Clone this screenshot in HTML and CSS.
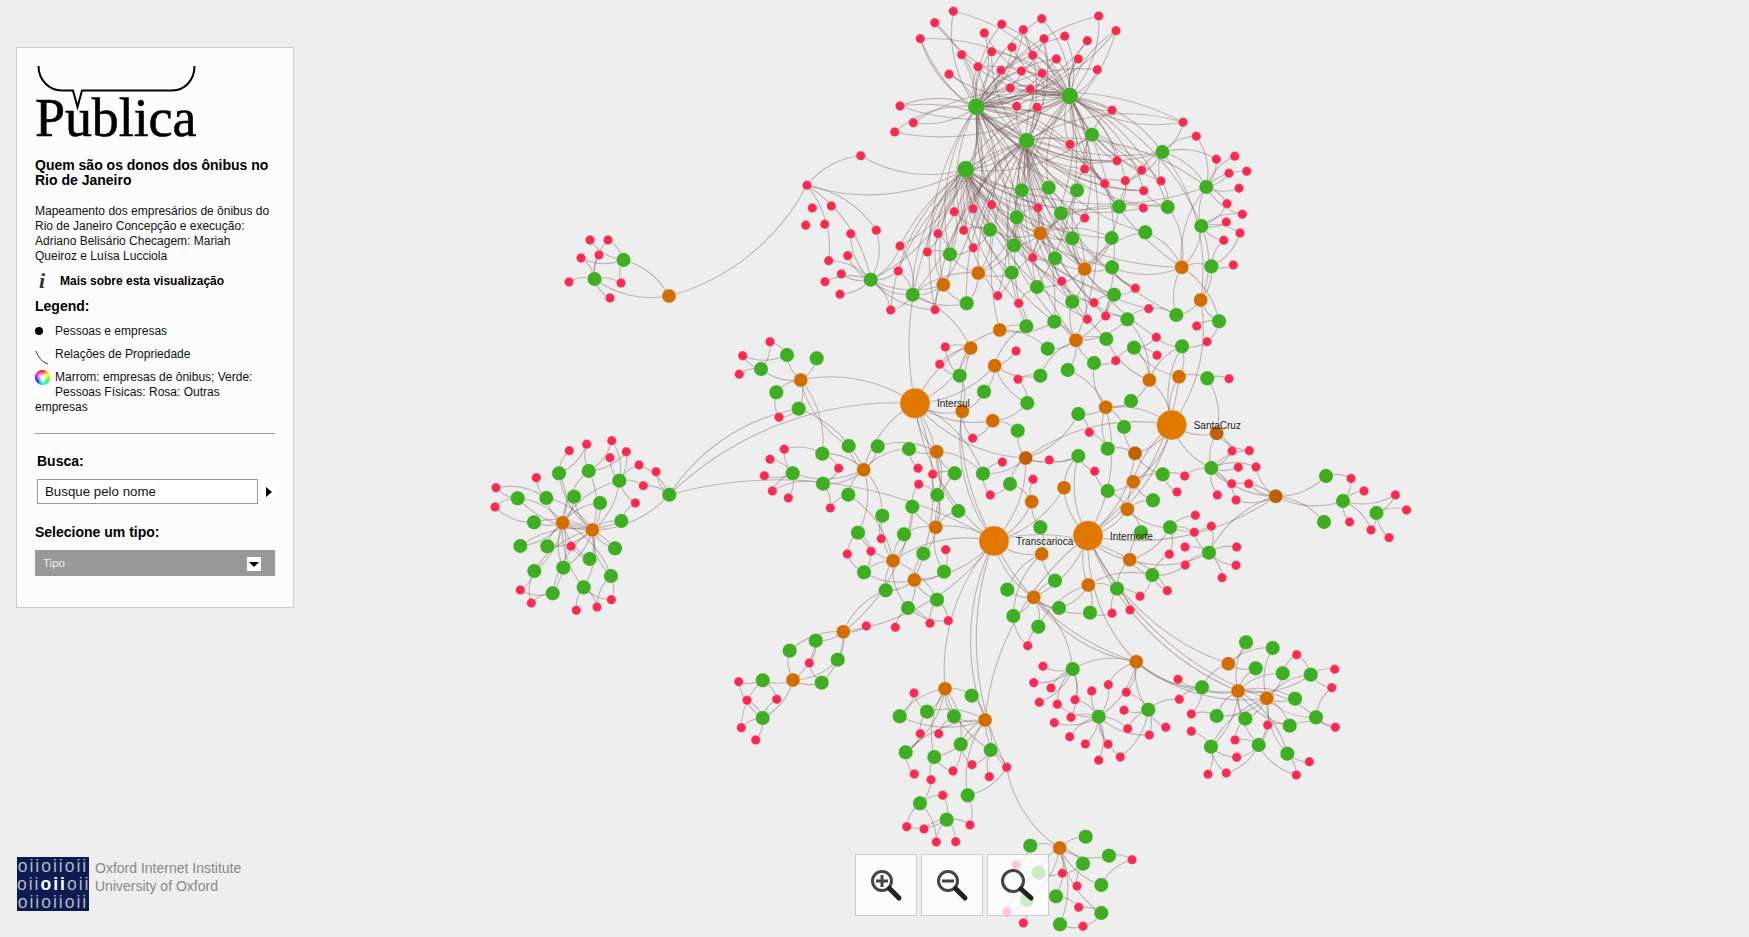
FILE: index.html
```html
<!DOCTYPE html>
<html lang="pt-BR">
<head>
    <meta charset="UTF-8">
    <meta name="viewport" content="width=device-width, initial-scale=1.0">
    <title>Quem são os donos dos ônibus no Rio de Janeiro</title>
    <link rel="stylesheet" href="styles.css">
</head>
<body>
    <svg id="graph" class="graph" width="1749" height="937"></svg>

    <aside class="panel">
        <div class="logo">
            <svg class="logo-bracket" width="170" height="46">
                <path d="M3.5 0 C3.5 14 14 24.5 27 24.5 L38 24.5 L42.5 41 L47 24.5 L137 24.5 C150 24.5 159.5 14 159.5 0" fill="none" stroke="#000" stroke-width="2"/>
            </svg>
            Publica
        </div>
        <h1>Quem são os donos dos ônibus no Rio de Janeiro</h1>
        <p class="intro">Mapeamento dos empresários de ônibus do Rio de Janeiro Concepção e execução: Adriano Belisário Checagem: Mariah Queiroz e Luísa Lucciola</p>
        <div class="more"><span class="more-icon">i</span>Mais sobre esta visualização</div>
        <h2 class="legend-title">Legend:</h2>
        <div class="legend-item"><span class="legend-dot"></span>Pessoas e empresas</div>
        <div class="legend-item">
            <svg class="legend-curve" width="15" height="15"><path d="M1 1 C3 7 7 12 13 14" fill="none" stroke="#333" stroke-width="1"/></svg>Relações de Propriedade
        </div>
        <div class="legend-item"><span class="legend-wheel"></span>Marrom: empresas de ônibus; Verde: Pessoas Físicas: Rosa: Outras empresas</div>
        <hr class="divider">
        <h2 class="search-title">Busca:</h2>
        <div class="search-row">
            <input class="search-input" type="text" value="Busque pelo nome">
            <span class="search-go"></span>
        </div>
        <h2 class="type-title">Selecione um tipo:</h2>
        <div class="type-select">Tipo<span class="type-arrow"></span></div>
    </aside>

    <div class="oxford">
        <div class="oxford-mark">
            <div>oiioiioii</div>
            <div>oii<b>oii</b>oii</div>
            <div>oiioiioii</div>
        </div>
        <div class="oxford-text">Oxford Internet Institute<br>University of Oxford</div>
    </div>

    <div class="zoom-controls">
        <button class="zoom-btn">
            <svg width="60" height="60"><circle cx="26" cy="26" r="9.5" fill="none" stroke="#444" stroke-width="3"/><path d="M20 26H32M26 20V32" stroke="#444" stroke-width="3"/><path d="M33.5 33.5L43 43" stroke="#222" stroke-width="5" stroke-linecap="round"/></svg>
        </button>
        <button class="zoom-btn">
            <svg width="60" height="60"><circle cx="26" cy="26" r="9.5" fill="none" stroke="#444" stroke-width="3"/><path d="M20 26H32" stroke="#444" stroke-width="3"/><path d="M33.5 33.5L43 43" stroke="#222" stroke-width="5" stroke-linecap="round"/></svg>
        </button>
        <button class="zoom-btn">
            <svg width="60" height="60"><circle cx="25" cy="26" r="10.5" fill="none" stroke="#444" stroke-width="3"/><path d="M33 34L43 43" stroke="#222" stroke-width="5" stroke-linecap="round"/></svg>
        </button>
    </div>

    <script src="graph.js"></script>
</body>
</html>
```
FILE: styles.css
```css
body {
    margin: 0;
    width: 1749px;
    height: 937px;
    overflow: hidden;
    background-color: #eeeeee;
    font-family: "Liberation Sans", Arial, sans-serif;
    color: #000;
}
.graph { position: absolute; left: 0; top: 0; }
.graph .edge { fill: none; stroke: #6b4a4a; stroke-opacity: 0.36; stroke-width: 1.1; }
.graph .node { stroke: #fff; stroke-opacity: 0.25; stroke-width: 1; }
.graph .red { fill: #fb2a50; }
.graph .green { fill: #3fae22; }
.graph .orange { fill: #d26d00; }
.graph .dark { fill: #bf6102; }
.graph .big { fill: #e07800; }
.graph text { font-size: 10px; fill: #222; }

.panel {
    position: absolute;
    left: 16px;
    top: 47px;
    width: 240px;
    padding: 18px 18px 31px;
    background-color: #fcfcfc;
    border: 1px solid #cccccc;
}
.logo {
    position: relative;
    height: 53px;
    padding-top: 26px;
    font-family: "Liberation Serif", "Times New Roman", serif;
    font-size: 54px;
    line-height: 52px;
    letter-spacing: -0.1px;
    -webkit-text-stroke: 0.6px #000;
}
.logo-bracket { position: absolute; left: 0; top: 0; }
h1 { margin: 13px 0 0; font-size: 14px; line-height: 15px; font-weight: bold; }
h2 { margin: 0; font-size: 14px; line-height: 16px; font-weight: bold; }
.intro { margin: 16px 0 0; font-size: 12px; line-height: 15px; color: #111; }
.more { display: flex; align-items: center; margin-top: 9px; height: 15px; font-size: 12px; font-weight: bold; }
.more-icon {
    width: 25px;
    padding-left: 4px;
    box-sizing: border-box;
    font-family: "Liberation Serif", serif;
    font-style: italic;
    font-size: 22px;
    color: #333;
}
.legend-title { margin-top: 10px; margin-bottom: 10px; }
.legend-item { font-size: 12px; line-height: 15px; margin-bottom: 8px; color: #111; }
.legend-dot {
    float: left;
    width: 8px;
    height: 8px;
    margin: 3px 12px 0 0;
    border-radius: 50%;
    background-color: #000;
}
.legend-curve { float: left; margin-right: 5px; margin-top: 3px; }
.legend-wheel {
    float: left;
    width: 15px;
    height: 15px;
    margin-right: 5px;
    margin-bottom: 15px;
    border-radius: 50%;
    background: radial-gradient(circle, #fff 15%, rgba(255,255,255,0) 65%),
        conic-gradient(#ff0000, #ffff00, #00ff00, #00ffff, #0000ff, #ff00ff, #ff0000);
}
.divider { margin: 18px 0 0; height: 1px; border: none; background-color: #999999; }
.search-title { margin-top: 19px; padding-left: 2px; }
.search-row { display: flex; align-items: center; margin-top: 10px; padding-left: 2px; }
.search-input {
    box-sizing: border-box;
    width: 221px;
    height: 25px;
    padding: 0 7px;
    border: 1px solid #999999;
    background-color: #fff;
    font-family: "Liberation Sans", Arial, sans-serif;
    font-size: 13.3px;
    color: #111;
}
.search-go {
    width: 13px;
    height: 13px;
    margin-left: 4px;
    background-color: #fff;
    position: relative;
}
.search-go::after {
    content: "";
    position: absolute;
    left: 4px;
    top: 1.5px;
    border-left: 6px solid #000;
    border-top: 5px solid transparent;
    border-bottom: 5px solid transparent;
}
.type-title { margin-top: 20px; }
.type-select {
    position: relative;
    margin-top: 10px;
    height: 26px;
    padding-left: 8px;
    background-color: #999999;
    color: #eee;
    font-size: 11.5px;
    line-height: 26px;
}
.type-arrow {
    position: absolute;
    right: 14px;
    top: 7px;
    width: 14px;
    height: 14px;
    background-color: #fff;
}
.type-arrow::after {
    content: "";
    position: absolute;
    left: 2px;
    top: 5px;
    border-top: 5px solid #000;
    border-left: 5px solid transparent;
    border-right: 5px solid transparent;
}

.oxford { position: absolute; left: 17px; top: 857px; display: flex; }
.oxford-mark {
    width: 72px;
    height: 54px;
    background-color: #0c1c52;
    color: #b4b8c4;
    font-size: 17.5px;
    line-height: 18px;
    letter-spacing: 2px;
    text-align: center;
}
.oxford-mark div { height: 18px; }
.oxford-mark b { color: #fff; }
.oxford-text { margin-left: 6px; padding-top: 2px; font-size: 14px; line-height: 18px; color: #888888; }

.zoom-controls { position: absolute; left: 855px; top: 854px; display: flex; gap: 4px; }
.zoom-btn {
    width: 62px;
    height: 62px;
    padding: 0;
    background-color: rgba(255, 255, 255, 0.75);
    border: 1px solid #cccccc;
}
.zoom-btn svg { display: block; }
```
FILE: graph.js
```js
// node positions, grouped by area of the map. coordinates are at 3x, relative to ox/oy
const areas = [
    { ox: 880, oy: 0,
      red: [[220,34],[164,68],[121,116],[313,99],[365,73],[430,89],[485,56],[245,164],[335,155],[396,142],[458,166],[492,116],[554,109],[622,122],[529,177],[595,177],[656,48],[708,92],[652,209],[207,223],[294,200],[363,211],[424,213],[486,220],[391,264],[451,268],[410,319],[471,322],[696,331],[60,318],[100,368],[44,396],[909,367],[949,409],[570,433],[711,482],[785,511],[614,507],[674,551],[736,542],[843,543],[791,572],[790,624],[1009,478],[1064,469],[1047,520],[1100,514],[1077,565],[1041,611],[1087,643],[1039,666],[1080,699],[1031,721],[1060,795],[474,623],[614,654],[335,614],[279,626],[223,635],[251,691],[174,701],[60,738],[142,756],[55,813],[280,743],[458,773],[545,844],[766,865],[353,887]],
      green: [[636,404],[847,456],[979,561],[964,678],[994,799],[425,571],[506,563],[591,571],[410,652],[543,640],[717,620],[863,621],[330,689],[577,715],[695,714],[796,697],[402,736],[525,775],[696,802],[210,763],[395,818],[471,861],[98,884],[260,910],[702,884],[577,905]],
      orange: [[481,700],[614,807],[905,802],[295,819],[190,854],[962,900]] },
    { ox: 780, oy: 150,
      red: [[242,17],[81,106],[97,174],[154,168],[77,226],[134,223],[212,251],[289,241],[203,317],[146,332],[184,372],[135,395],[180,433],[465,479],[653,437],[716,460],[496,591],[708,603],[479,643],[332,480]],
      green: [[272,389],[739,529],[823,515],[803,596]],
      orange: [[659,540],[572,594],[644,647]] },
    { ox: 1050, oy: 270,
      red: [[132,98],[112,148],[167,138],[296,116],[440,168],[471,215],[319,202],[321,256],[197,272]],
      green: [[232,148],[379,135],[507,154],[169,207],[252,233],[396,229],[132,279]],
      orange: [[78,211]] },
    { ox: 880, oy: 370,
      red: [[414,28],[1047,26],[278,205],[628,187],[367,276],[508,270],[644,304],[114,295],[158,313],[116,343],[459,328],[331,375],[914,318],[891,366],[1056,243],[1108,242],[1075,292],[1128,291],[1055,341],[1106,341],[1012,375],[1068,390],[946,436],[994,469],[943,487],[915,531],[868,553],[916,585],[1070,531],[1068,586],[1026,623],[197,539],[780,679],[862,662],[750,720],[696,730],[443,827],[489,889],[205,752],[150,760],[46,772]],
      green: [[239,17],[481,17],[563,0],[982,25],[312,65],[442,99],[413,182],[595,132],[753,93],[732,171],[87,237],[595,258],[683,236],[994,294],[848,313],[224,310],[309,311],[390,342],[683,363],[819,391],[172,375],[97,410],[7,437],[235,423],[72,493],[481,472],[870,472],[783,487],[987,548],[130,551],[192,605],[17,661],[171,689],[84,714],[817,615],[382,659],[711,656],[525,632],[537,714],[400,738],[630,728],[475,770],[1098,817],[1178,834],[1127,895],[578,897]],
      orange: [[677,112],[338,152],[247,124],[170,245],[552,353],[760,335],[742,418],[455,395],[167,472],[39,572],[103,630],[485,552],[749,569],[625,645],[461,682],[769,875],[1045,881],[808,30],[897,20]],
      dark: [[437,264],[765,250],[1010,190],[1187,379]] },
    { ox: 720, oy: 330,
      red: [[150,35],[68,77],[58,133],[177,262],[193,358],[150,388],[133,437],[157,483],[205,504],[356,415],[331,534],[484,626],[453,664],[382,672]],
      green: [[201,75],[290,85],[123,117],[169,187],[236,236],[218,430],[307,371],[386,348],[473,349],[309,461],[385,494],[414,608],[432,727]],
      orange: [[242,150],[431,419]] },
    { ox: 480, oy: 420,
      red: [[268,92],[320,73],[395,62],[390,113],[439,95],[477,135],[528,155],[490,197],[466,249],[169,173],[48,203],[45,261],[273,379],[121,510],[154,549],[289,571],[351,561],[394,539]],
      green: [[326,153],[237,160],[418,182],[113,235],[199,234],[282,230],[360,249],[568,224],[162,307],[424,303],[121,378],[202,379],[405,385],[329,417],[163,453],[250,443],[393,468],[311,502],[218,520]],
      orange: [[248,308],[337,330]] },
    { ox: 720, oy: 600,
      red: [[439,78],[268,189],[56,245],[81,301],[170,298],[64,383],[107,420],[582,279],[601,401],[656,401],[756,494],[699,513],[583,522],[633,539],[860,502],[808,530],[668,586],[560,680],[612,687],[750,675],[649,726],[707,725]],
      green: [[287,122],[209,152],[353,179],[128,241],[305,248],[128,354],[755,287],[539,349],[621,335],[702,349],[722,433],[812,450],[557,457],[643,471],[743,586],[600,610],[680,659]],
      orange: [[370,95],[219,240],[675,266],[795,360]] },
    { ox: 1020, oy: 620,
      red: [[41,188],[93,204],[58,247],[112,253],[165,239],[215,213],[265,194],[319,217],[312,271],[323,326],[153,292],[103,308],[149,350],[196,372],[264,373],[236,421],[301,411],[437,322],[388,345],[830,104],[944,148],[935,203],[946,322],[474,178],[478,238],[514,282],[514,334],[645,360],[650,412],[564,463],[619,459],[743,315],[868,425],[829,465]],
      green: [[236,290],[385,269],[546,202],[590,288],[573,380],[676,296],[788,160],[872,164],[825,236],[809,317],[888,292],[716,375],[802,401]],
      orange: [[654,213],[740,235]] },
    { ox: 840, oy: 830,
      red: [[876,89],[667,130],[711,168],[716,232],[729,289],[550,279],[529,105],[500,245]],
      green: [[571,47],[737,20],[807,77],[729,101],[784,165],[648,199],[784,249],[660,283],[596,128],[561,210]],
      orange: [[659,54]] }
];

// small clusters far from the rest, plain page coordinates
const outer = [
    [669,296,"orange"],[623.5,260,"green"],[594.5,279,"green"],[590,240,"red"],[608,240,"red"],[581,258,"red"],[599,255,"red"],[569,282,"red"],[621,283,"red"],[610,298,"red"],
    [1326,476,"green"],[1343,501,"green"],[1324,522,"green"],[1376.5,513,"green"],[1351,478.5,"red"],[1364,491,"red"],[1395.4,495,"red"],[1406.5,510,"red"],[1349.6,522,"red"],[1371,530,"red"],[1389,537.6,"red"]
];

const nodes = [];

function addNode(x, y, type, r, label) {
    // areas overlap a little, skip what is already there
    if (nodes.some(n => Math.hypot(n.x - x, n.y - y) < 5)) return;
    nodes.push({ x, y, type, r, label, i: nodes.length });
}

// the four big companies and the four big owners go first
addNode(915, 403.3, "big", 15, "Intersul");
addNode(1171.7, 425, "big", 15, "SantaCruz");
addNode(994, 541, "big", 15, "Transcarioca");
addNode(1088, 535.7, "big", 15, "Internorte");
addNode(976.3, 106.7, "green", 8.5);
addNode(1069.7, 96, "green", 8.5);
addNode(1026.7, 140.7, "green", 8);
addNode(965.7, 169.3, "green", 8.5);

const sizes = { red: 4.7, green: 7.2, orange: 7, dark: 7 };
areas.forEach(a => {
    ["orange", "dark", "green", "red"].forEach(type => {
        (a[type] || []).forEach(p => addNode(a.ox + p[0] / 3, a.oy + p[1] / 3, type, sizes[type]));
    });
});
outer.forEach(p => addNode(p[0], p[1], p[2], sizes[p[2]]));

const bigs = nodes.slice(0, 4);
const owners = nodes.slice(4, 8);
const firms = nodes.filter(n => n.type == "orange" || n.type == "dark");
const holders = nodes.filter(n => n.type != "red");
const seen = {};
const edges = [];

function link(a, b, sweep) {
    const key = Math.min(a.i, b.i) + "-" + Math.max(a.i, b.i);
    if (a == b || seen[key]) return;
    seen[key] = true;
    edges.push([a, b, sweep === undefined ? (a.i + b.i) % 2 : sweep]);
}

function nearest(n, pool, count, max) {
    return pool
        .filter(p => p != n && Math.hypot(p.x - n.x, p.y - n.y) < max)
        .sort((p, q) => Math.hypot(p.x - n.x, p.y - n.y) - Math.hypot(q.x - n.x, q.y - n.y))
        .slice(0, count);
}

function at(x, y) {
    return nearest({ x, y }, nodes, 1, 40)[0];
}

// long ties between clusters, [from x, from y, to x, to y, sweep]. these go first so they keep their bend
const ties = [
    [807,185,860,156,1],[807,185,966,169,0],[669,296,807,185,0],[860,156,966,169,0],[807,185,871,280,1],
    [807,185,815,245,1],[807,185,866,210,1],[807,185,831,250,1],[807,185,866,247,1],
    [669,495,915,403,1],[669,495,799,408,1],[669,495,994,541,1],[799,380,915,403,1],[586,530,669,495,0],
    [871,280,966,169,0],[900,246,966,169,0],[871,280,913,315,0],[871,280,947,309,0],[913,315,967,319,0],[913,315,975,349,1],
    [915,403,966,169,1],[915,403,1003,320,1],[915,403,994,471,1],[915,403,962,411,0],[915,403,1026,458,0],[915,403,963,358,0],[915,403,994,541,0],
    [994,541,1026,458,0],[994,541,962,411,1],[994,541,935,527,0],[994,541,893,561,0],[994,541,1064,488,0],[994,541,945,689,0],[994,541,985,720,0],[994,541,843,632,1],[994,541,1034,597,0],[994,541,1136,662,0],[994,541,1042,554,0],[994,541,1007,767,0],
    [1088,536,1064,488,1],[1088,536,1127,509,0],[1088,536,1130,559,0],[1088,536,1088,585,0],[1088,536,1034,597,1],[1088,536,1136,662,0],[1088,536,1228,664,0],[1088,536,1267,698,0],[1088,536,1238,691,0],[1088,536,1276,496,0],[1088,536,1171,425,0],[1088,536,1072,450,1],
    [1172,425,1106,407,0],[1172,425,1149,380,0],[1172,425,1179,377,1],[1172,425,1135,453,1],[1172,425,1217,433,0],[1172,425,1212,468,0],[1172,425,1127,482,1],[1172,425,1035,457,0],
    [1276,496,1212,468,1],[1276,496,1326,476,0],[1276,496,1324,522,1],[1276,496,1343,501,0],[1276,496,1106,548,0],
    [1136,662,1267,698,0],[1136,662,1238,691,0],[1136,662,1203,691,0],[1034,597,1136,662,0],
    [843,632,920,515,0],[843,632,885,590,1],[985,720,1007,767,0],[1007,767,1060,848,0],[985,720,1088,536,1],
    [1182,346,1171,425,0],[1200,300,1171,425,1],[1201,226,1200,300,1],[1162,152,1200,300,1],[1069,96,1162,152,1],[1026,140,1162,152,0],[1026,140,1206,187,1],
    [1206,187,1201,226,0],[1162,152,1206,187,1],[965,169,1206,187,0],[1069,96,1201,226,1]
];
ties.forEach(t => {
    const a = at(t[0], t[1]);
    const b = at(t[2], t[3]);
    if (a && b) link(a, b, t[4]);
});

nodes.forEach(n => {
    if (n.type == "red") nearest(n, holders, n.i % 3 == 0 ? 1 : 2, 55).forEach(p => link(n, p));
    if (n.type == "green" && n.r < 8) nearest(n, firms, 2, 90).forEach(p => link(n, p));

    // the dense part at the top: almost everything there answers to the four owners
    if (n.r < 8 && n.x > 880 && n.x < 1185 && n.y < 345) {
        if (n.y < 200 && n.type == "red") {
            link(n, owners[0]);
            link(n, owners[1]);
            if (n.i % 3 == 0) link(n, owners[2]);
        } else {
            link(n, owners[n.i % 2 ? 2 : 3]);
            if (n.i % 3 == 0) link(n, owners[0]);
            if (n.i % 5 == 0) link(n, owners[1]);
        }
    }
});

owners.forEach(a => owners.forEach(b => link(a, b)));

// firms in the middle pick up a tie or two to the big companies
firms.forEach(f => {
    if (f.y > 345 && f.y < 660 && f.x > 850 && f.x < 1240) {
        link(f, nearest(f, bigs, 1, 400)[0]);
        if (f.i % 2 == 0) link(f, nearest(f, bigs, 2, 400)[1]);
    }
});

let svg = "";
edges.forEach(e => {
    const r = (Math.hypot(e[0].x - e[1].x, e[0].y - e[1].y) * 1.25).toFixed(1);
    svg += `<path class="edge" d="M${e[0].x.toFixed(1)} ${e[0].y.toFixed(1)}A${r} ${r} 0 0 ${e[2]} ${e[1].x.toFixed(1)} ${e[1].y.toFixed(1)}"/>`;
});
nodes.forEach(n => {
    svg += `<circle class="node ${n.type}" cx="${n.x.toFixed(1)}" cy="${n.y.toFixed(1)}" r="${n.r}"/>`;
});
bigs.forEach(n => {
    svg += `<text x="${(n.x + 22).toFixed(1)}" y="${(n.y + 4).toFixed(1)}">${n.label}</text>`;
});
document.getElementById("graph").innerHTML = svg;
```
